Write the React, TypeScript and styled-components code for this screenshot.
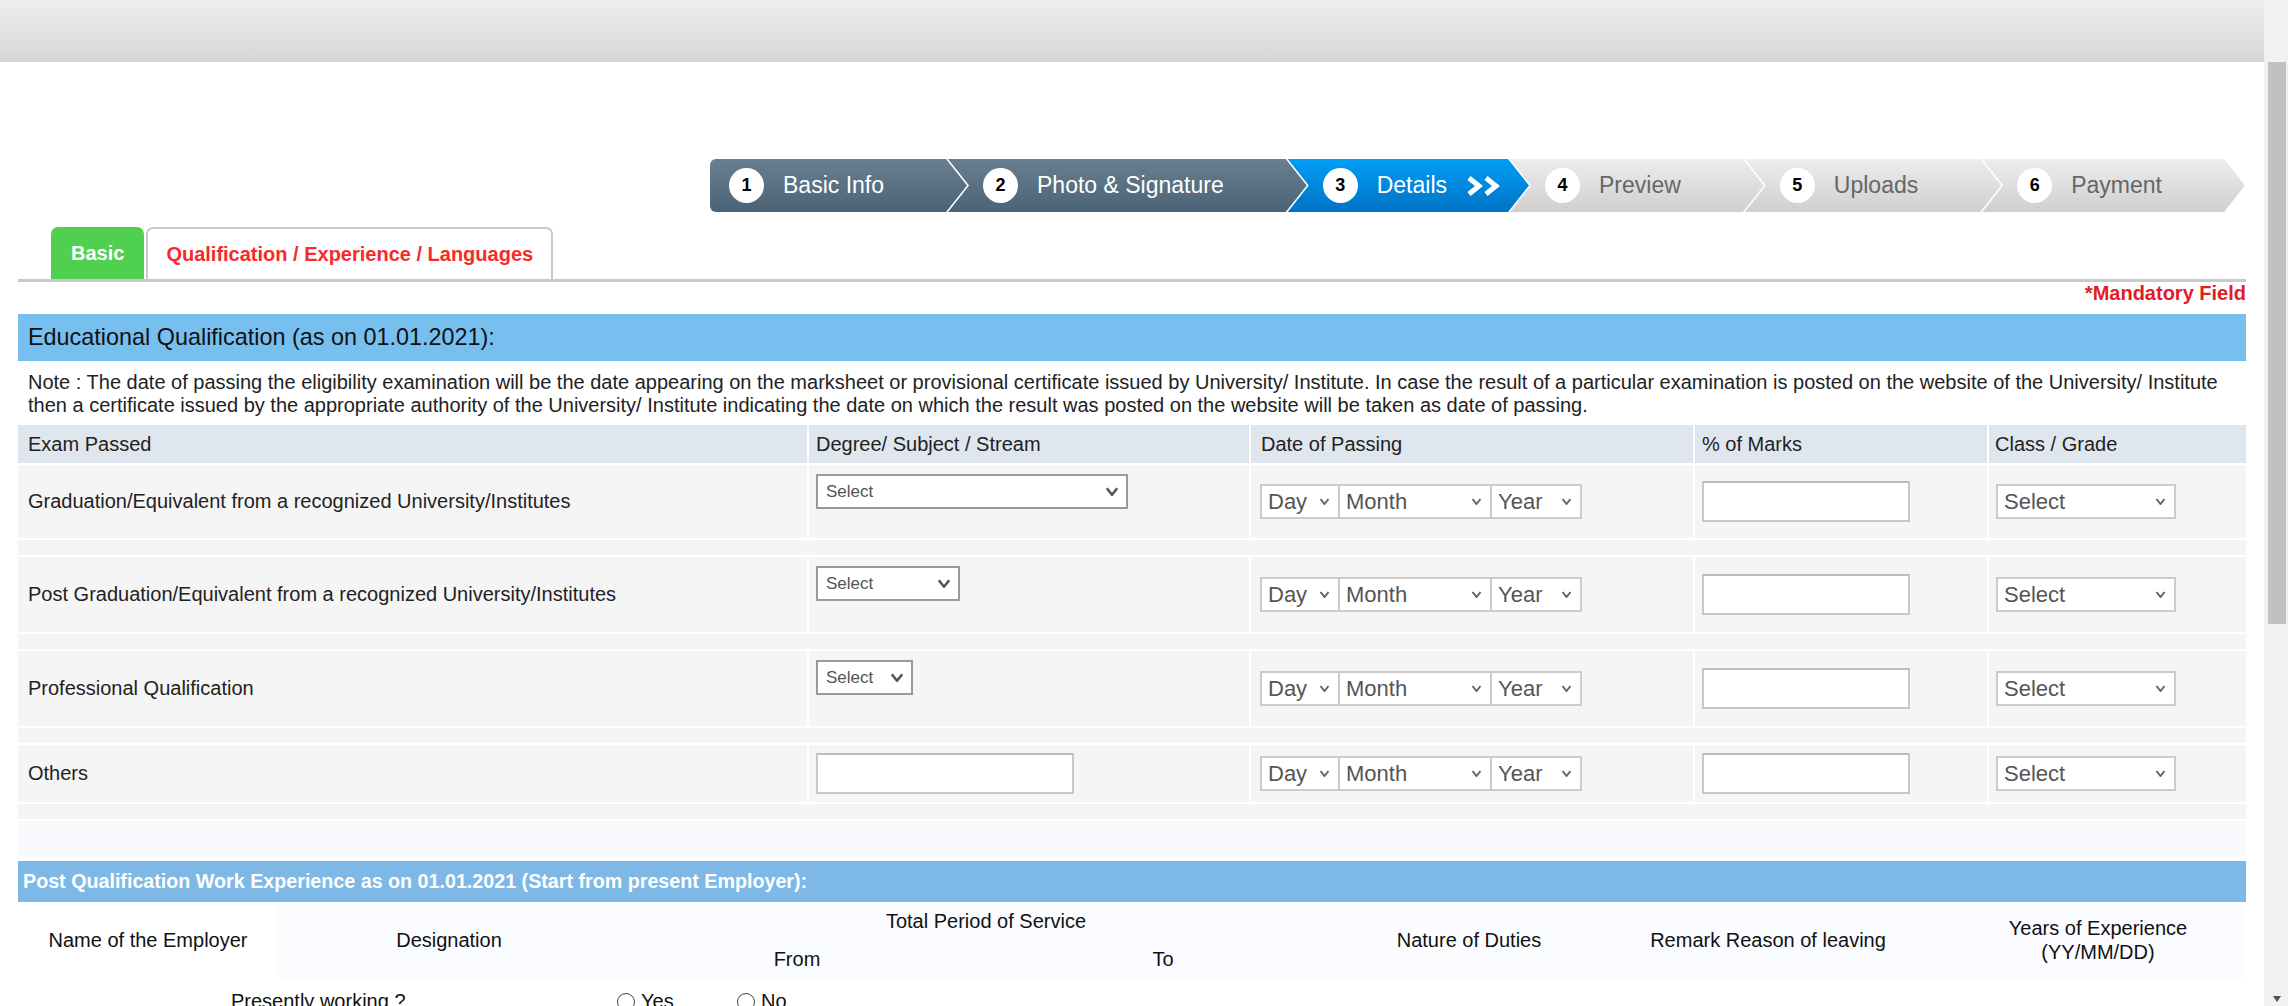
import React from "react";
import styled, { createGlobalStyle, css } from "styled-components";

const GlobalStyle = createGlobalStyle`
  html, body { margin: 0; padding: 0; background: #fff; }
  body { font-family: "Liberation Sans", Arial, sans-serif; color: #222; }
  * { box-sizing: border-box; }
`;

const Viewport = styled.div`
  display: flex;
  width: 2288px;
  height: 1006px;
  overflow: hidden;
`;

const Main = styled.div`
  flex: 1;
  min-width: 0;
  display: flex;
  flex-direction: column;
`;

const TopBar = styled.div`
  height: 62px;
  flex-shrink: 0;
  background: linear-gradient(#eeeeee, #d6d6d6);
`;

const Content = styled.div`
  display: flex;
  flex-direction: column;
  padding: 0 18px 0 18px;
`;

/* ---------- Stepper ---------- */
const Stepper = styled.div`
  display: flex;
  justify-content: flex-end;
  margin-top: 97px;
  padding-right: 1px;
`;

type StepState = "done" | "active" | "todo";

const stepBg: Record<StepState, string> = {
  done: "linear-gradient(#687f91, #4b6375)",
  active: "linear-gradient(#009df6, #0073c5)",
  todo: "linear-gradient(#ededed, #cfcfcf)",
};

const Step = styled.div<{ $state: StepState; $first?: boolean }>`
  display: flex;
  align-items: center;
  height: 53px;
  padding: 0 ${(p) => (p.$state === "active" ? 26 : 83)}px 0
    ${(p) => (p.$first ? 19 : 35)}px;
  margin-left: ${(p) => (p.$first ? 0 : -19)}px;
  background: ${(p) => stepBg[p.$state]};
  color: ${(p) => (p.$state === "todo" ? "#666" : "#fff")};
  font-size: 23px;
  white-space: nowrap;
  ${(p) =>
    p.$first
      ? css`
          border-radius: 6px 0 0 6px;
          clip-path: polygon(0 0, calc(100% - 21px) 0, 100% 50%, calc(100% - 21px) 100%, 0 100%);
        `
      : css`
          clip-path: polygon(0 0, calc(100% - 21px) 0, 100% 50%, calc(100% - 21px) 100%, 0 100%, 21px 50%);
        `}
`;

const StepNum = styled.span`
  width: 35px;
  height: 35px;
  border-radius: 50%;
  background: #fff;
  color: #000;
  display: flex;
  align-items: center;
  justify-content: center;
  font-weight: bold;
  font-size: 18px;
  flex-shrink: 0;
`;

const StepLabel = styled.span`
  margin-left: 19px;
`;

const StepArrows = styled.svg`
  margin-left: 18px;
  flex-shrink: 0;
`;

/* ---------- Tabs ---------- */
const TabStrip = styled.div`
  display: flex;
  align-items: flex-end;
  gap: 2px;
  margin-top: 15px;
  padding-left: 33px;
  border-bottom: 3px solid #c9c9c9;
`;

const Tab = styled.div<{ $active?: boolean }>`
  height: 52px;
  display: flex;
  align-items: center;
  font-size: 20px;
  font-weight: bold;
  border-radius: 7px 7px 0 0;
  ${(p) =>
    p.$active
      ? css`
          background: #4fd14f;
          color: #fff;
          padding: 0 20px;
        `
      : css`
          background: #fff;
          color: #f52a2a;
          border: 2px solid #c9c9c9;
          border-bottom: none;
          padding: 0 18px;
        `}
`;

const Mandatory = styled.div`
  text-align: right;
  color: #e31b23;
  font-weight: bold;
  font-size: 20px;
  line-height: 23px;
`;

const SectionBar = styled.div`
  margin-top: 9px;
  height: 47px;
  background: #77bfef;
  display: flex;
  align-items: center;
  padding-left: 10px;
  font-size: 23.4px;
  color: #111;
`;

const Note = styled.p`
  margin: 10px 0 0;
  padding-left: 10px;
  font-size: 20px;
  line-height: 23px;
  color: #222;
`;

/* ---------- Qualification table ---------- */
const QualGrid = styled.div`
  margin-top: 8px;
  display: grid;
  grid-template-columns: 789px 440px 442px 292px 1fr;
  grid-template-rows: 38px 73px 15px 75px 15px 75px 15px 57px 15px;
  gap: 2px;
`;

const HeadCell = styled.div<{ $pad?: number }>`
  background: #dfe6ee;
  display: flex;
  align-items: center;
  padding-left: ${(p) => p.$pad ?? 8}px;
  font-size: 20px;
  color: #222;
`;

const Cell = styled.div<{ $top?: boolean; $label?: boolean }>`
  background: #f5f5f5;
  display: flex;
  align-items: ${(p) => (p.$top ? "flex-start" : "center")};
  padding: ${(p) => (p.$top ? "9px 7px 0" : p.$label ? "0 10px" : "0 7px")};
  font-size: 20px;
  color: #222;
`;

const SpacerRow = styled.div`
  grid-column: 1 / -1;
  background: #f5f5f5;
`;

const SelectBox = styled.div<{ $w: number; $dark?: boolean; $small?: boolean }>`
  width: ${(p) => p.$w}px;
  height: 35px;
  flex-shrink: 0;
  display: flex;
  align-items: center;
  justify-content: space-between;
  background: #fff;
  border: 2px solid ${(p) => (p.$dark ? "#9a9a9a" : "#cccccc")};
  padding: 0 ${(p) => (p.$dark ? 7 : 8)}px 0 ${(p) => (p.$dark ? 8 : 6)}px;
  font-size: ${(p) => (p.$small ? 17 : 22)}px;
  color: #555;
  white-space: nowrap;
  & + & {
    margin-left: -2px;
  }
`;

const DateGroup = styled.div`
  display: flex;
  padding-left: 2px;
`;

const TextInput = styled.div<{ $w: number }>`
  width: ${(p) => p.$w}px;
  height: 41px;
  background: #fff;
  border: 2px solid #c8c8c8;
  border-top-color: #bdbdbd;
`;

const FooterBand = styled.div`
  margin-top: 2px;
  height: 36px;
  background: #f8fafd;
`;

/* ---------- Experience ---------- */
const SectionBar2 = styled.div`
  margin-top: 4px;
  height: 41px;
  background: #7db8e7;
  display: flex;
  align-items: center;
  padding-left: 5px;
  font-size: 19.7px;
  font-weight: bold;
  color: #fff;
`;

const ExpHead = styled.div`
  display: grid;
  grid-template-columns: 260px 342px 354px 378px 234px 364px 1fr;
  grid-template-rows: 38px 38px;
  background: #fafcff;
  font-size: 20px;
  color: #111;
`;

const ExpCell = styled.div<{ $white?: boolean; $span?: string; $row?: string }>`
  display: flex;
  align-items: center;
  justify-content: center;
  text-align: center;
  line-height: 24px;
  grid-row: ${(p) => p.$row ?? "1 / span 2"};
  grid-column: ${(p) => p.$span ?? "auto"};
  background: ${(p) => (p.$white ? "#fff" : "transparent")};
`;

const PresentRow = styled.div`
  display: flex;
  align-items: center;
  padding-top: 12px;
  font-size: 20px;
  line-height: 23px;
  color: #111;
`;

const PresentLabel = styled.span`
  width: 599px;
  padding-left: 213px;
`;

const RadioOption = styled.label`
  display: flex;
  align-items: center;
  gap: 6px;
  width: 120px;
`;

const RadioDot = styled.span`
  width: 18px;
  height: 18px;
  border-radius: 50%;
  border: 1px solid #444;
  background: #fff;
`;

/* ---------- Scrollbar ---------- */
const ScrollTrack = styled.div`
  width: 24px;
  flex-shrink: 0;
  background: #f1f1f1;
  display: flex;
  flex-direction: column;
  align-items: flex-start;
`;

const ScrollThumb = styled.div`
  margin: 62px 0 0 4px;
  width: 18px;
  height: 562px;
  background: #c1c1c1;
`;

const ScrollArrow = styled.div`
  margin: auto 0 4px 9px;
  width: 0;
  height: 0;
  border-left: 4px solid transparent;
  border-right: 4px solid transparent;
  border-top: 6px solid #505050;
`;

const Chevron = ({ w, h, color, sw }: { w: number; h: number; color: string; sw: number }) => (
  <svg width={w} height={h} viewBox={`0 0 ${w} ${h}`}>
    <polyline
      points={`${sw / 2 + 0.5},${sw / 2} ${w / 2},${h - sw / 2} ${w - sw / 2 - 0.5},${sw / 2}`}
      fill="none"
      stroke={color}
      strokeWidth={sw}
    />
  </svg>
);

const Select = ({
  w,
  label,
  dark,
  small,
}: {
  w: number;
  label: string;
  dark?: boolean;
  small?: boolean;
}) => (
  <SelectBox $w={w} $dark={dark} $small={small}>
    <span>{label}</span>
    {dark ? <Chevron w={14} h={9} color="#555" sw={2.6} /> : <Chevron w={11} h={7} color="#666" sw={2} />}
  </SelectBox>
);

const DateSelects = () => (
  <DateGroup>
    <Select w={80} label="Day" />
    <Select w={154} label="Month" />
    <Select w={92} label="Year" />
  </DateGroup>
);

const steps: { n: number; label: string; state: StepState }[] = [
  { n: 1, label: "Basic Info", state: "done" },
  { n: 2, label: "Photo & Signature", state: "done" },
  { n: 3, label: "Details", state: "active" },
  { n: 4, label: "Preview", state: "todo" },
  { n: 5, label: "Uploads", state: "todo" },
  { n: 6, label: "Payment", state: "todo" },
];

const rows: { label: string; degree: React.ReactNode }[] = [
  {
    label: "Graduation/Equivalent from a recognized University/Institutes",
    degree: <Select w={312} label="Select" dark small />,
  },
  {
    label: "Post Graduation/Equivalent from a recognized University/Institutes",
    degree: <Select w={144} label="Select" dark small />,
  },
  { label: "Professional Qualification", degree: <Select w={97} label="Select" dark small /> },
  { label: "Others", degree: null },
];

export default function App() {
  return (
    <>
      <GlobalStyle />
      <Viewport>
        <Main>
          <TopBar />
          <Content>
            <Stepper>
              {steps.map((s, i) => (
                <Step key={s.n} $state={s.state} $first={i === 0}>
                  <StepNum>{s.n}</StepNum>
                  <StepLabel>{s.label}</StepLabel>
                  {s.state === "active" && (
                    <StepArrows width="38" height="22" viewBox="0 0 38 22">
                      <polyline points="4,3 14,11 4,19" fill="none" stroke="#fff" strokeWidth="5" />
                      <polyline points="21,3 31,11 21,19" fill="none" stroke="#fff" strokeWidth="5" />
                    </StepArrows>
                  )}
                </Step>
              ))}
            </Stepper>

            <TabStrip>
              <Tab $active>Basic</Tab>
              <Tab>Qualification / Experience / Languages</Tab>
            </TabStrip>
            <Mandatory>*Mandatory Field</Mandatory>

            <SectionBar>Educational Qualification (as on 01.01.2021):</SectionBar>
            <Note>
              Note : The date of passing the eligibility examination will be the date appearing on the marksheet or
              provisional certificate issued by University/ Institute. In case the result of a particular examination is
              posted on the website of the University/ Institute
              <br />
              then a certificate issued by the appropriate authority of the University/ Institute indicating the date on
              which the result was posted on the website will be taken as date of passing.
            </Note>

            <QualGrid>
              <HeadCell $pad={10}>Exam Passed</HeadCell>
              <HeadCell $pad={7}>Degree/ Subject / Stream</HeadCell>
              <HeadCell $pad={10}>Date of Passing</HeadCell>
              <HeadCell $pad={7}>% of Marks</HeadCell>
              <HeadCell $pad={6}>Class / Grade</HeadCell>
              {rows.map((r) => (
                <React.Fragment key={r.label}>
                  <Cell $label>{r.label}</Cell>
                  {r.degree ? <Cell $top>{r.degree}</Cell> : <Cell><TextInput $w={258} /></Cell>}
                  <Cell>
                    <DateSelects />
                  </Cell>
                  <Cell>
                    <TextInput $w={208} />
                  </Cell>
                  <Cell>
                    <Select w={180} label="Select" />
                  </Cell>
                  <SpacerRow />
                </React.Fragment>
              ))}
            </QualGrid>
            <FooterBand />

            <SectionBar2>Post Qualification Work Experience as on 01.01.2021 (Start from present Employer):</SectionBar2>
            <ExpHead>
              <ExpCell $white>Name of the Employer</ExpCell>
              <ExpCell>Designation</ExpCell>
              <ExpCell $row="1" $span="3 / span 2">
                Total Period of Service
              </ExpCell>
              <ExpCell $row="2" $span="3">
                From
              </ExpCell>
              <ExpCell $row="2" $span="4">
                To
              </ExpCell>
              <ExpCell $span="5">Nature of Duties</ExpCell>
              <ExpCell $span="6">Remark Reason of leaving</ExpCell>
              <ExpCell $span="7">
                Years of Experience
                <br />
                (YY/MM/DD)
              </ExpCell>
            </ExpHead>
            <PresentRow>
              <PresentLabel>Presently working ?</PresentLabel>
              <RadioOption>
                <RadioDot />
                Yes
              </RadioOption>
              <RadioOption>
                <RadioDot />
                No
              </RadioOption>
            </PresentRow>
          </Content>
        </Main>
        <ScrollTrack>
          <ScrollThumb />
          <ScrollArrow />
        </ScrollTrack>
      </Viewport>
    </>
  );
}
